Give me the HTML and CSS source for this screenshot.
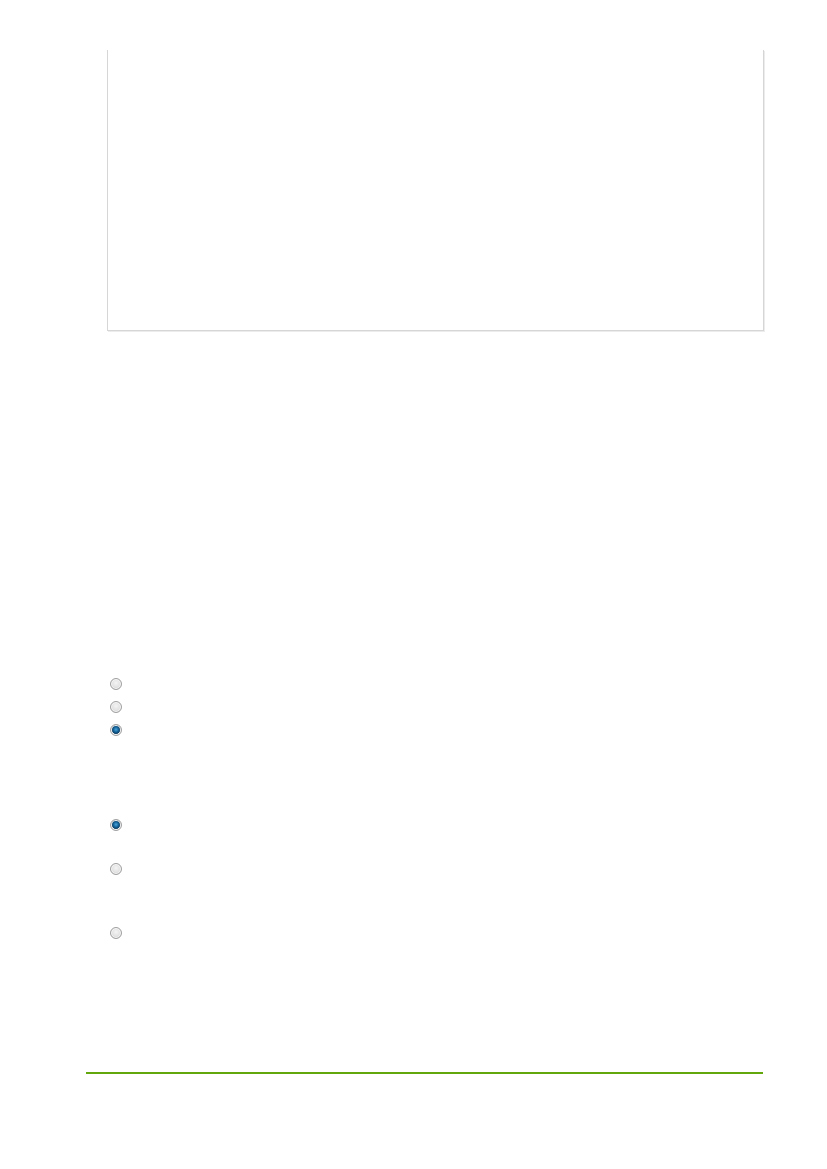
FILE: index.html
```html
<!DOCTYPE html>
<html lang="en">
  <head>
    <meta charset="UTF-8" />
    <meta name="viewport" content="width=device-width, initial-scale=1.0" />
    <title>Form</title>
    <link rel="stylesheet" href="styles.css">
  </head>
  <body>
    <div class="panel"></div>

    <div class="choices choices-first">
      <label class="choice"><input type="radio" name="a" /></label>
      <label class="choice"><input type="radio" name="a" /></label>
      <label class="choice"><input type="radio" name="a" checked /></label>
    </div>

    <div class="choices choices-second">
      <label class="choice tall"><input type="radio" name="b" checked /></label>
      <label class="choice taller"><input type="radio" name="b" /></label>
      <label class="choice"><input type="radio" name="b" /></label>
    </div>

    <hr class="rule" />
  </body>
</html>
```

FILE: styles.css
```css
body {
  margin: 0;
  padding-top: 50px;
  font-family: "Liberation Sans", Arial, sans-serif;
  background-color: #fff;
}
.panel {
  margin-left: 107px;
  width: 655px;
  height: 280px;
  border: 1px solid #d6d6d6;
  border-top: none;
  box-shadow: 1px 1px 0 #ececec;
}
.choices {
  margin-left: 110px;
  display: flex;
  flex-direction: column;
}
.choices-first {
  margin-top: 347px;
}
.choices-second {
  margin-top: 72px;
}
.choice {
  display: flex;
  align-items: flex-start;
  height: 23px;
}
.choice.tall {
  height: 44px;
}
.choice.taller {
  height: 64px;
}
input[type="radio"] {
  appearance: none;
  -webkit-appearance: none;
  margin: 0;
  width: 12px;
  height: 12px;
  border-radius: 50%;
  border: 1px solid #9f9f9f; /* outer ring */
  background: radial-gradient(circle at 50% 40%, #f4f4f4 0, #e3e3e3 50%, #c4c4c4 100%);
  box-shadow: inset 0 0 0 1px #f8f8f8;
}
input[type="radio"]:checked {
  background: radial-gradient(circle at 50% 45%, #4aa6dc 0, #15669c 32%, #0a3a5e 58%, #e6e6e6 64%, #c8c8c8 100%);
}
.rule {
  margin: 122px 0 0 86px;
  width: 677px;
  height: 2px;
  border: none;
  background-color: #62a80c;
}
```
